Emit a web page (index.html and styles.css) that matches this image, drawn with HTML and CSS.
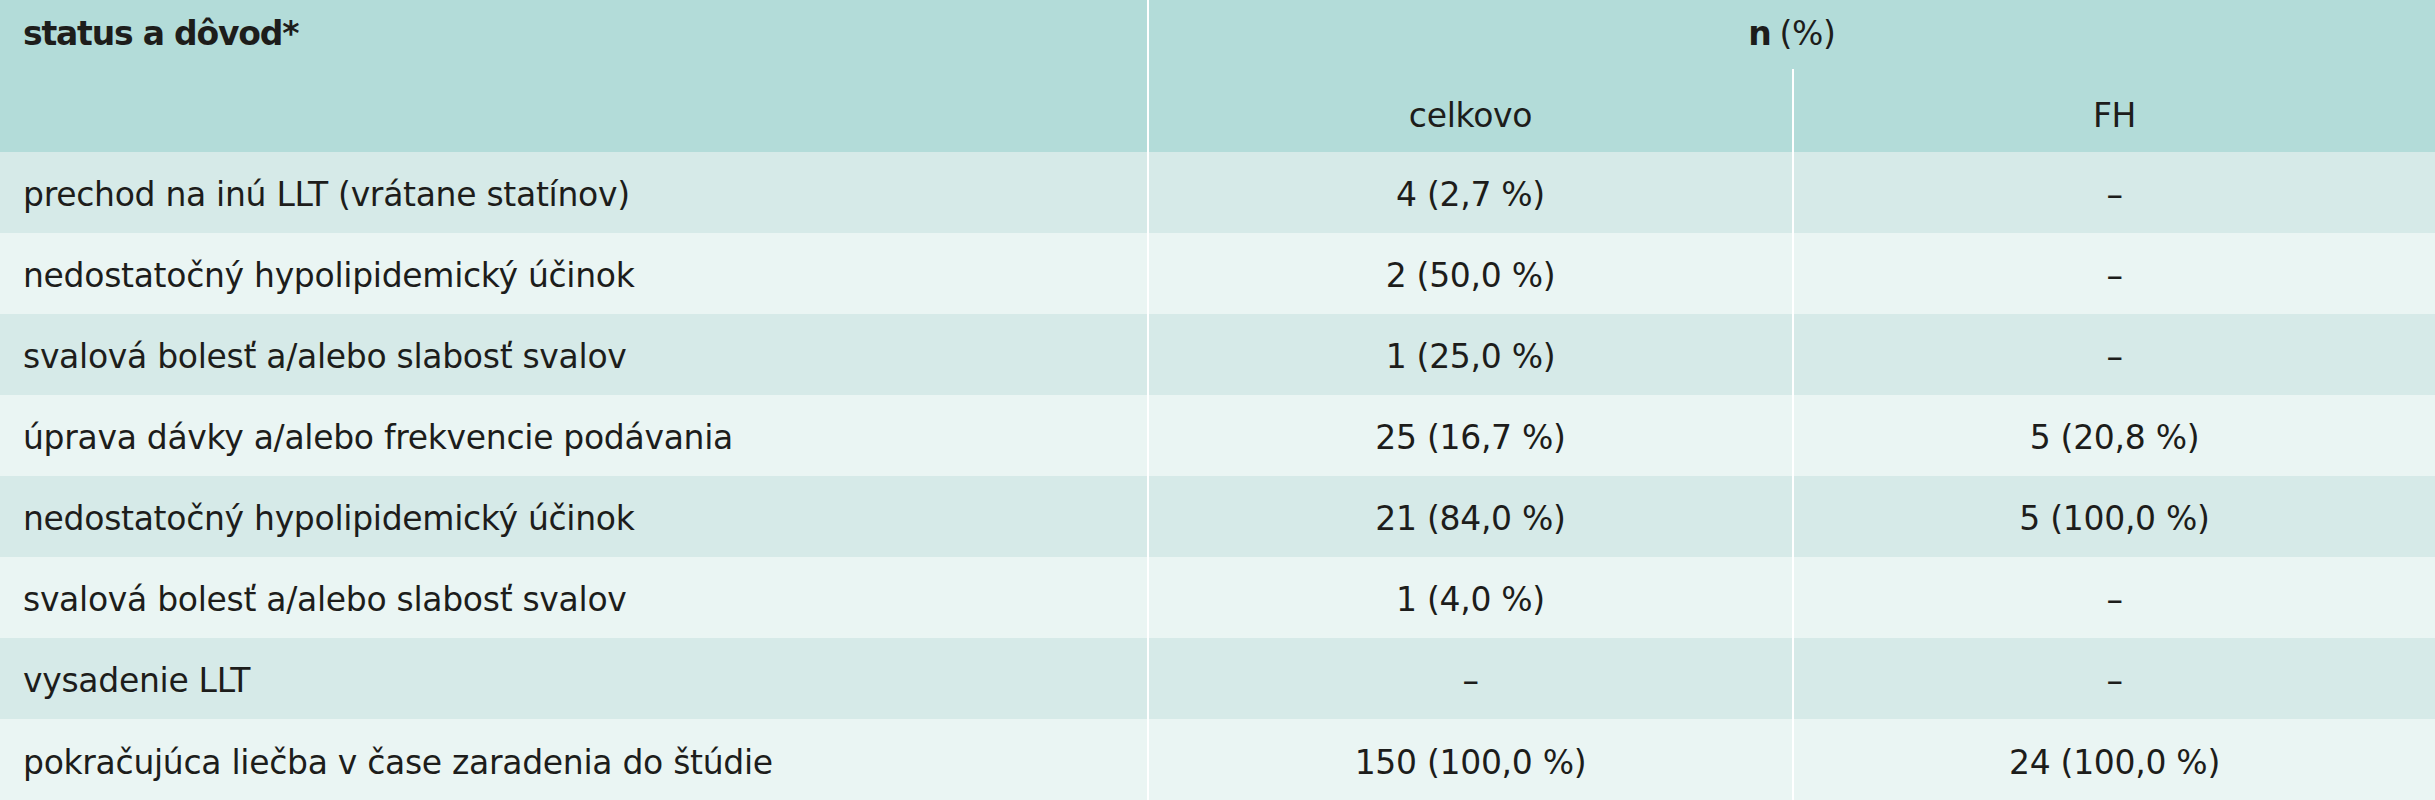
FILE: index.html
```html
<!DOCTYPE html>
<html lang="sk">
<head>
<meta charset="utf-8">
<title>Tabuľka</title>
<link rel="stylesheet" href="styles.css">
</head>
<body>
<div class="table">
  <div class="cell head head-main">status a dôvod*</div>
  <div class="cell head head-n"><b>n</b> (%)</div>
  <div class="cell head head-sub">celkovo</div>
  <div class="cell head head-sub">FH</div>

  <div class="cell label dark">prechod na inú LLT (vrátane statínov)</div>
  <div class="cell num dark">4 (2,7 %)</div>
  <div class="cell num dark">–</div>

  <div class="cell label light">nedostatočný hypolipidemický účinok</div>
  <div class="cell num light">2 (50,0 %)</div>
  <div class="cell num light">–</div>

  <div class="cell label dark">svalová bolesť a/alebo slabosť svalov</div>
  <div class="cell num dark">1 (25,0 %)</div>
  <div class="cell num dark">–</div>

  <div class="cell label light">úprava dávky a/alebo frekvencie podávania</div>
  <div class="cell num light">25 (16,7 %)</div>
  <div class="cell num light">5 (20,8 %)</div>

  <div class="cell label dark">nedostatočný hypolipidemický účinok</div>
  <div class="cell num dark">21 (84,0 %)</div>
  <div class="cell num dark">5 (100,0 %)</div>

  <div class="cell label light">svalová bolesť a/alebo slabosť svalov</div>
  <div class="cell num light">1 (4,0 %)</div>
  <div class="cell num light">–</div>

  <div class="cell label dark">vysadenie LLT</div>
  <div class="cell num dark">–</div>
  <div class="cell num dark">–</div>

  <div class="cell label light">pokračujúca liečba v čase zaradenia do štúdie</div>
  <div class="cell num light">150 (100,0 %)</div>
  <div class="cell num light">24 (100,0 %)</div>
</div>
</body>
</html>
```

FILE: styles.css
```css
html, body {
  margin: 0;
  padding: 0;
  background: #ffffff;
}

body {
  font-family: "DejaVu Sans", "Open Sans", sans-serif;
  font-size: 33px;
  letter-spacing: -0.3px;
  color: #1d1d1b;
}

.table {
  display: grid;
  grid-template-columns: 1147px 643px 641px;
  grid-template-rows: 69px 83px repeat(7, 81px) 82px;
  column-gap: 2px;
  row-gap: 0;
  background: #ffffff;
  width: 2435px;
  height: 800px;
}

.cell {
  display: flex;
  align-items: center;
  padding-top: 4px;
  box-sizing: border-box;
  line-height: normal;
  white-space: nowrap;
}

.head {
  background: #b3dcd9;
}

.head-main {
  grid-row: 1 / span 2;
  align-items: flex-start;
  padding: 14px 0 0 23px;
  font-weight: bold;
  letter-spacing: -1.2px;
}

.head-n {
  grid-column: 2 / span 2;
  justify-content: center;
  align-items: flex-start;
  padding-top: 14px;
}

.head-n b {
  font-weight: bold;
  margin-right: 8px;
}

.head-sub {
  justify-content: center;
  align-items: flex-start;
  padding-top: 27px;
}

.label {
  padding-left: 23px;
}

.num {
  justify-content: center;
}

.dark {
  background: #d6eae8;
}

.light {
  background: #eaf5f3;
}
```
